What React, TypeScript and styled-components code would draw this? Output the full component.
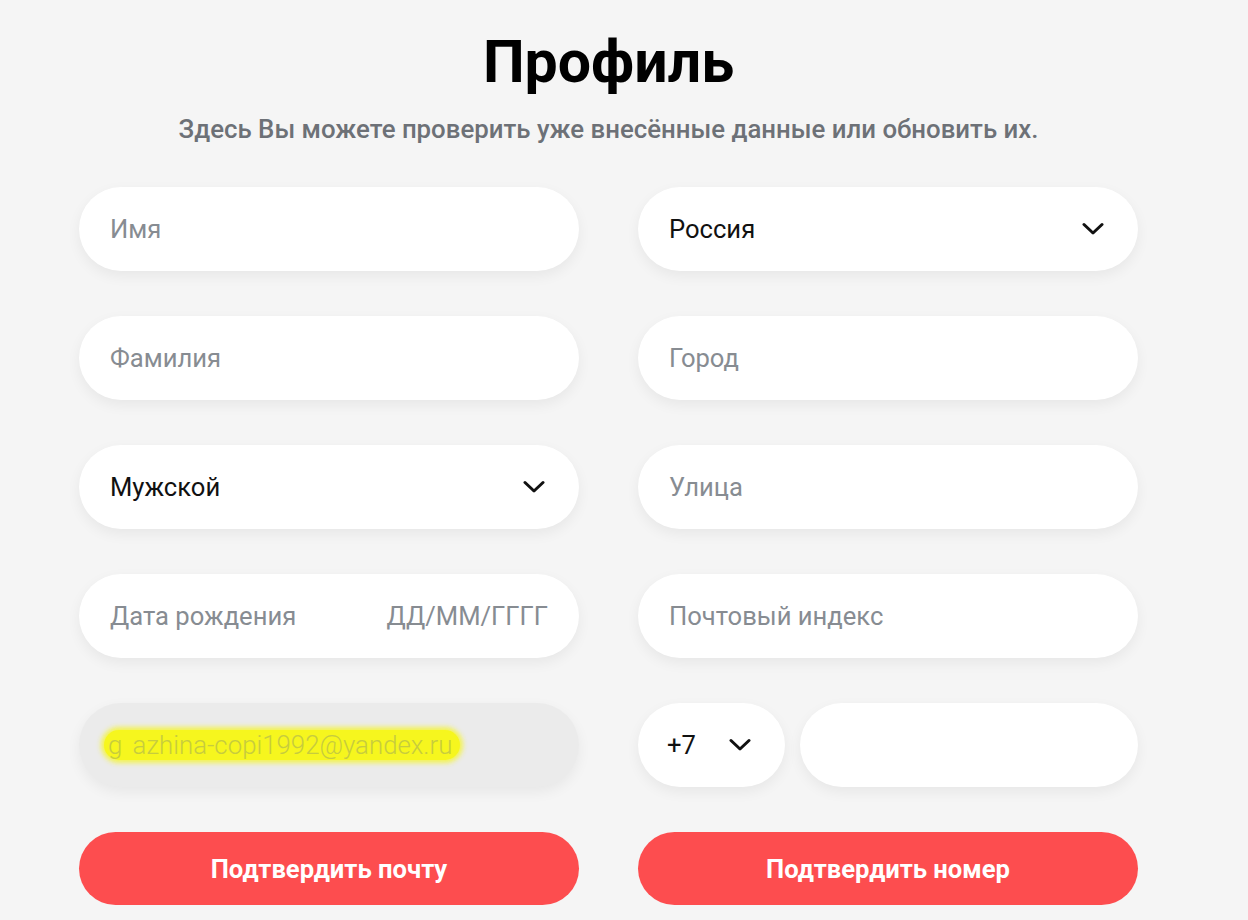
import React from "react";
import styled, { createGlobalStyle } from "styled-components";

const GlobalStyle = createGlobalStyle`
  html, body {
    margin: 0;
    padding: 0;
    background: #f5f5f5;
  }
  body {
    font-family: Roboto, "Noto Sans", "Liberation Sans", sans-serif;
    color: #111;
  }
`;

const Page = styled.div`
  width: 1059px;
  margin-left: 79px;
  padding-top: 24px;
`;

const Title = styled.h1`
  margin: 0;
  text-align: center;
  font-size: 59px;
  line-height: 76px;
  font-weight: 700;
  color: #000;
`;

const Subtitle = styled.p`
  margin: 13px 0 0;
  text-align: center;
  font-size: 25.8px;
  line-height: 32px;
  font-weight: 500;
  color: #6d7177;
`;

const Form = styled.div`
  margin-top: 42px;
  display: grid;
  grid-template-columns: 500px 500px;
  column-gap: 59px;
  row-gap: 45px;
`;

const Field = styled.div<{ $disabled?: boolean }>`
  height: 84px;
  box-sizing: border-box;
  border-radius: 42px;
  background: ${(p) => (p.$disabled ? "#ebebeb" : "#fff")};
  box-shadow: 0 5px 14px rgba(0, 0, 0, 0.06);
  display: flex;
  align-items: center;
  justify-content: space-between;
  padding: 0 34px 0 31px;
  font-size: 25.6px;
`;

const Placeholder = styled.span`
  color: #878c92;
`;

const DateMask = styled(Placeholder)`
  margin-right: -3px;
`;

const Value = styled.span`
  color: #111;
`;

const PhoneRow = styled.div`
  display: flex;
  gap: 15px;
`;

const CodeField = styled(Field)`
  width: 147px;
  flex: none;
  padding: 0 34px 0 29px;
`;

const PhoneField = styled(Field)`
  flex: 1;
`;

const Highlight = styled.span`
  margin-left: -6px;
  padding: 0 8px 0 4px;
  color: #c7cc3e;
  background: #f6f61e;
  border-radius: 16px;
  box-shadow: 0 0 5px 3px rgba(246, 246, 30, 0.75);
  font-weight: 300;
  font-size: 25.8px;
  word-spacing: 4px;
`;

const Button = styled.button`
  height: 73px;
  border: none;
  border-radius: 37px;
  background: #fd4d4f;
  color: #fff;
  font-family: inherit;
  font-size: 25.6px;
  font-weight: 700;
  cursor: pointer;
`;

const Chevron = () => (
  <svg width="22" height="14" viewBox="0 0 22 14" fill="none">
    <path
      d="M2 2.5L11 11L20 2.5"
      stroke="#111"
      strokeWidth="3"
      strokeLinecap="round"
      strokeLinejoin="round"
    />
  </svg>
);

export default function App() {
  return (
    <>
      <GlobalStyle />
      <Page>
        <Title>Профиль</Title>
        <Subtitle>
          Здесь Вы можете проверить уже внесённые данные или обновить их.
        </Subtitle>
        <Form>
          <Field>
            <Placeholder>Имя</Placeholder>
          </Field>
          <Field>
            <Value>Россия</Value>
            <Chevron />
          </Field>
          <Field>
            <Placeholder>Фамилия</Placeholder>
          </Field>
          <Field>
            <Placeholder>Город</Placeholder>
          </Field>
          <Field>
            <Value>Мужской</Value>
            <Chevron />
          </Field>
          <Field>
            <Placeholder>Улица</Placeholder>
          </Field>
          <Field>
            <Placeholder>Дата рождения</Placeholder>
            <DateMask>ДД/ММ/ГГГГ</DateMask>
          </Field>
          <Field>
            <Placeholder>Почтовый индекс</Placeholder>
          </Field>
          <Field $disabled>
            <Highlight>g azhina-copi1992@yandex.ru</Highlight>
          </Field>
          <PhoneRow>
            <CodeField>
              <Value>+7</Value>
              <Chevron />
            </CodeField>
            <PhoneField />
          </PhoneRow>
          <Button>Подтвердить почту</Button>
          <Button>Подтвердить номер</Button>
        </Form>
      </Page>
    </>
  );
}
